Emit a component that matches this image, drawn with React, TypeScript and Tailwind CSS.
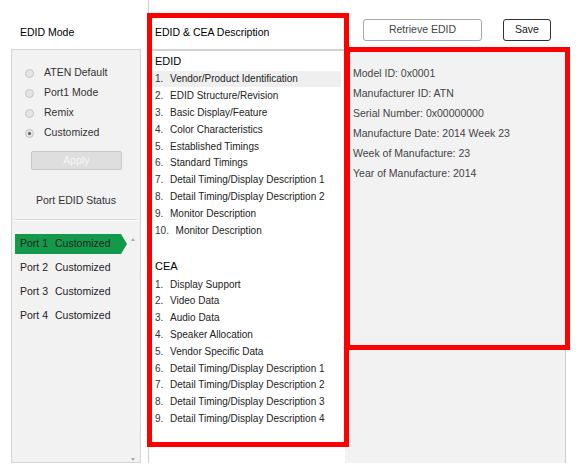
import React from 'react';

const MODES = [
  { label: 'ATEN Default', checked: false },
  { label: 'Port1 Mode', checked: false },
  { label: 'Remix', checked: false },
  { label: 'Customized', checked: true },
];

const PORTS = [1, 2, 3, 4];

const EDID_ITEMS = [
  'Vendor/Product Identification',
  'EDID Structure/Revision',
  'Basic Display/Feature',
  'Color Characteristics',
  'Established Timings',
  'Standard Timings',
  'Detail Timing/Display Description 1',
  'Detail Timing/Display Description 2',
  'Monitor Description',
  'Monitor Description',
];

const CEA_ITEMS = [
  'Display Support',
  'Video Data',
  'Audio Data',
  'Speaker Allocation',
  'Vendor Specific Data',
  'Detail Timing/Display Description 1',
  'Detail Timing/Display Description 2',
  'Detail Timing/Display Description 3',
  'Detail Timing/Display Description 4',
];

const INFO = [
  'Model ID: 0x0001',
  'Manufacturer ID: ATN',
  'Serial Number: 0x00000000',
  'Manufacture Date: 2014 Week 23',
  'Week of Manufacture: 23',
  'Year of Manufacture: 2014',
];

function Radio({ checked }: { checked: boolean }) {
  return (
    <span className="w-[9px] h-[9px] shrink-0 rounded-full border border-[#c6c6c6] bg-[#e4e4e4] flex items-center justify-center">
      {checked && <span className="w-[3px] h-[3px] rounded-full bg-[#5a5a5a]" />}
    </span>
  );
}

function ListItem({ n, text, active }: { n: number; text: string; active?: boolean }) {
  return (
    <div
      className={`h-[16.8px] flex items-center gap-[6.7px] pl-[3px] text-[10px] text-[#222] ${
        active ? 'bg-[#efefef]' : ''
      }`}
    >
      <span className="text-[#333]">{n}.</span>
      <span>{text}</span>
    </div>
  );
}

export default function App() {
  return (
    <div className="relative w-[579px] h-[468px] bg-white overflow-hidden font-['Liberation_Sans',Arial,sans-serif] text-[#222]">
      <div className="flex pl-[11px]">
        {/* EDID mode column */}
        <div className="w-[130px] flex flex-col">
          <div className="h-[49px] pt-[25px] pl-[9px] text-[10.5px] leading-[14px] text-black">EDID Mode</div>
          <div className="h-[414px] border border-[#d4d4d4] bg-[#f2f2f2] flex flex-col">
            <div className="pt-[13px] flex flex-col">
              {MODES.map((m) => (
                <div key={m.label} className="h-[20px] flex items-center pl-[13px] gap-[10px]">
                  <Radio checked={m.checked} />
                  <span className="text-[10.5px] text-[#333]">{m.label}</span>
                </div>
              ))}
            </div>
            <div className="mt-[8px] ml-[19px] w-[91px] h-[19px] rounded-[2px] border border-[#c8c8c8] bg-[#dedede] flex items-center justify-center text-[10.5px] text-[#f6f6f6]">
              Apply
            </div>
            <div className="mt-[23px] h-[14px] leading-[14px] text-center text-[10.5px] text-[#333]">Port EDID Status</div>
            <div className="mt-[12px] mx-[3px] border-t border-[#d9d9d9] border-b border-b-white" />
            <div className="relative flex-1 mt-[11px] flex flex-col">
              {PORTS.map((p) => (
                <div key={p} className="h-[24px] flex items-center">
                  <div
                    className={`ml-[3px] w-[112px] h-[20px] flex items-center pl-[5px] text-[10.5px] text-[#222] ${
                      p === 1 ? 'bg-[#129a4a] [clip-path:polygon(0_0,calc(100%-6px)_0,100%_50%,calc(100%-6px)_100%,0_100%)]' : ''
                    }`}
                  >
                    <span>Port {p}</span>
                    <span className="ml-[7px]">Customized</span>
                  </div>
                </div>
              ))}
              <span className="absolute right-[5px] top-[6px] w-0 h-0 border-x-[2px] border-x-transparent border-b-[3px] border-b-[#aaaaaa]" />
              <span className="absolute right-[5px] bottom-[1px] w-0 h-0 border-x-[2px] border-x-transparent border-t-[3px] border-t-[#aaaaaa]" />
            </div>
          </div>
        </div>

        {/* Description column */}
        <div className="ml-[7px] w-[197px] flex flex-col border-l border-[#cfcfcf]">
          <div className="h-[49px] pt-[25px] pl-[6px] text-[10.5px] leading-[14px] text-black">EDID &amp; CEA Description</div>
          <div className="h-[2px] bg-[#d2d2d2]" />
          <div className="h-[412px] bg-white pt-[1px] px-[3px] pr-[4px] flex flex-col">
            <div className="h-[18.6px] flex items-center pl-[3px] text-[11px] text-black">EDID</div>
            {EDID_ITEMS.map((t, i) => (
              <ListItem key={'e' + i} n={i + 1} text={t} active={i === 0} />
            ))}
            <div className="h-[18.5px]" />
            <div className="h-[18.6px] flex items-center pl-[3px] text-[11px] text-black">CEA</div>
            {CEA_ITEMS.map((t, i) => (
              <ListItem key={'c' + i} n={i + 1} text={t} />
            ))}
          </div>
        </div>

        {/* Detail column */}
        <div className="w-[221px] flex flex-col">
          <div className="h-[49px] pt-[19px] flex items-start">
            <button className="ml-[18px] w-[119px] h-[22px] rounded-[3px] border border-[#a8a8a8] bg-white text-[10.5px] text-[#444]">
              Retrieve EDID
            </button>
            <button className="ml-[21px] w-[48px] h-[22px] rounded-[3px] border border-[#333] bg-white text-[10.5px] text-[#222]">
              Save
            </button>
          </div>
          <div className="h-[414px] bg-[#f2f2f2] border-r border-[#cfcfcf] pt-[15px] pl-[8px] flex flex-col">
            {INFO.map((t) => (
              <div key={t} className="h-[20px] flex items-center text-[10.5px] text-[#444]">
                {t}
              </div>
            ))}
          </div>
        </div>
      </div>

      {/* annotation boxes */}
      <div className="absolute left-[147px] top-[13px] w-[202px] h-[434px] border-[5px] border-[#ff0000] pointer-events-none" />
      <div className="absolute left-[345px] top-[47px] w-[225px] h-[303px] border-[5px] border-[#ff0000] pointer-events-none" />
    </div>
  );
}
